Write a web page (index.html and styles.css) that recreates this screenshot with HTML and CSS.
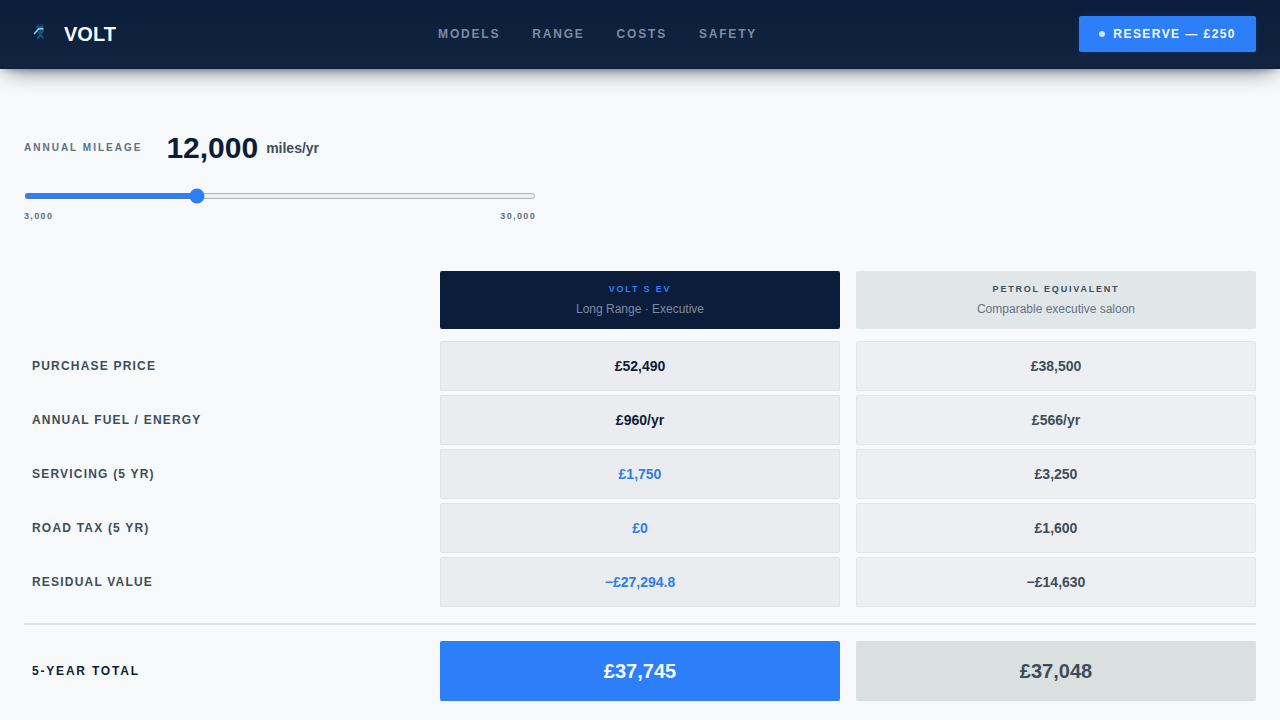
FILE: index.html
```html
<!DOCTYPE html>
<html lang="en">
<head>
    <meta charset="UTF-8">
    <meta name="viewport" content="width=device-width, initial-scale=1.0">
    <title>VOLT - Running Costs</title>
    <link rel="stylesheet" href="styles.css">
</head>
<body>
    <header class="site-header">
        <a class="logo" href="#">
            <svg class="logo-mark" viewBox="0 0 32 32" aria-hidden="true">
                <g fill="none" stroke-linecap="round" stroke-linejoin="round">
                    <path d="M14 7v4M18 7v4M13 9h6" stroke="#16578a" stroke-width="1.500"/>
                    <path d="M14 13l5 7M19 13l-5 7M16.500 12v5" stroke="#155580" stroke-width="2"/>
                    <path d="M10.500 15.500l4-4.500 2-.5 2.500.5" stroke="#93d4f0" stroke-width="1.500"/>
                </g>
            </svg>
            <span>VOLT</span>
        </a>
        <nav class="main-nav">
            <a href="#models">MODELS</a>
            <a href="#range">RANGE</a>
            <a href="#costs">COSTS</a>
            <a href="#safety">SAFETY</a>
        </nav>
        <button class="reserve-btn" type="button"><span class="dot"></span>RESERVE — £250</button>
    </header>

    <main class="costs" id="costs">
        <section class="mileage">
            <div class="mileage-head">
                <label for="mileage">ANNUAL MILEAGE</label>
                <output class="mileage-value" for="mileage" id="mileageValue">12,000</output>
                <span class="mileage-unit">miles/yr</span>
            </div>
            <input class="slider" type="range" id="mileage" min="3000" max="30000" step="500" value="12000">
            <div class="scale"><span>3,000</span><span>30,000</span></div>
        </section>

        <table class="compare">
            <thead>
                <tr>
                    <td></td>
                    <th class="head ev" scope="col">VOLT S EV<small>Long Range · Executive</small></th>
                    <th class="head petrol" scope="col">PETROL EQUIVALENT<small>Comparable executive saloon</small></th>
                </tr>
            </thead>
            <tbody>
                <tr>
                    <th scope="row">PURCHASE PRICE</th>
                    <td class="cell ev">£52,490</td>
                    <td class="cell">£38,500</td>
                </tr>
                <tr>
                    <th scope="row">ANNUAL FUEL / ENERGY</th>
                    <td class="cell ev">£960/yr</td>
                    <td class="cell">£566/yr</td>
                </tr>
                <tr>
                    <th scope="row">SERVICING (5 YR)</th>
                    <td class="cell ev saving">£1,750</td>
                    <td class="cell">£3,250</td>
                </tr>
                <tr>
                    <th scope="row">ROAD TAX (5 YR)</th>
                    <td class="cell ev saving">£0</td>
                    <td class="cell">£1,600</td>
                </tr>
                <tr>
                    <th scope="row">RESIDUAL VALUE</th>
                    <td class="cell ev saving">−£27,294.8</td>
                    <td class="cell">−£14,630</td>
                </tr>
            </tbody>
            <tfoot>
                <tr>
                    <th scope="row">5-YEAR TOTAL</th>
                    <td class="total ev">£37,745</td>
                    <td class="total">£37,048</td>
                </tr>
            </tfoot>
        </table>
    </main>

    <script>
        const mileage = document.getElementById('mileage');
        const mileageValue = document.getElementById('mileageValue');

        mileage.addEventListener('input', function() {
            mileageValue.textContent = Number(mileage.value).toLocaleString('en-GB');
        });
    </script>
</body>
</html>
```
FILE: styles.css
```css
* {
    margin: 0;
    padding: 0;
    box-sizing: border-box;
}

body {
    font-family: "Liberation Sans", Arial, sans-serif;
    background: #f7f9fb;
    color: #3d4d5c;
}

/* Header */
.site-header {
    position: sticky;
    top: 0;
    display: flex;
    align-items: center;
    justify-content: space-between;
    padding: 16px 24px;
    background: linear-gradient(180deg, #0b1d3a, #10243f);
    border-bottom: 1px solid #10203a;
    box-shadow: 0 8px 24px -8px rgba(10, 20, 45, 0.6), 0 4px 8px -4px rgba(10, 20, 45, 0.4);
}

.logo {
    display: flex;
    align-items: center;
    gap: 8px;
    color: #f7f9fb;
    font-size: 20px;
    font-weight: bold;
    text-decoration: none;
}

.logo-mark {
    width: 32px;
    height: 32px;
}

.main-nav {
    display: flex;
    gap: 32px;
}

.main-nav a {
    color: #7c8ba3;
    font-size: 12px;
    font-weight: bold;
    letter-spacing: 0.15em;
    text-decoration: none;
}

.reserve-btn {
    display: flex;
    align-items: center;
    gap: 8px;
    height: 36px;
    padding: 0 20px;
    background: #2d7ff9;
    border: none;
    border-radius: 2px;
    box-shadow: 0 0 8px rgba(45, 127, 249, 0.15);
    color: #f7f9fb;
    font-family: inherit;
    font-size: 12px;
    font-weight: bold;
    letter-spacing: 0.12em;
    cursor: pointer;
}

.dot {
    width: 6px;
    height: 6px;
    border-radius: 50%;
    background: #c9e2fd;
}

/* Mileage */
.costs {
    padding: 64px 24px 16px;
}

.mileage {
    max-width: 512px;
    margin-bottom: 48px;
}

.mileage-head {
    display: flex;
    align-items: center;
    line-height: 30px;
}

.mileage-head label {
    margin-right: 24px;
    color: #5f7080;
    font-size: 10px;
    font-weight: bold;
    letter-spacing: 0.2em;
}

.mileage-value {
    margin-right: 8px;
    color: #0b1d3a;
    font-size: 30px;
    font-weight: bold;
}

.mileage-unit {
    font-size: 14px;
    font-weight: bold;
}

.slider {
    display: block;
    width: 100%;
    height: 6px;
    margin: 30px 0 10px;
    accent-color: #2d7ff9;
    cursor: pointer;
}

.scale {
    display: flex;
    justify-content: space-between;
    color: #5f7080;
    font-size: 9px;
    font-weight: bold;
    line-height: 14px;
    letter-spacing: 0.15em;
}

/* Comparison table */
.compare,
.compare thead,
.compare tbody,
.compare tfoot {
    display: block;
}

.compare tr {
    display: grid;
    grid-template-columns: repeat(3, 1fr);
    column-gap: 16px;
    align-items: center;
}

.compare thead {
    margin-bottom: 12px;
}

.compare tbody tr {
    margin-bottom: 4px;
}

.compare tfoot {
    margin-top: 16px;
    padding-top: 16px;
    border-top: 2px solid #dfe2e6;
}

.compare th[scope="row"] {
    padding-left: 8px;
    font-size: 12px;
    letter-spacing: 0.1em;
    text-align: left;
}

.compare tfoot th[scope="row"] {
    color: #0b1d3a;
    letter-spacing: 0.15em;
}

.head {
    padding: 11px 16px;
    background: #e1e6e8;
    border-radius: 2px;
    font-size: 9px;
    line-height: 14px;
    letter-spacing: 0.2em;
}

.head small {
    display: block;
    margin-top: 4px;
    color: #64748b;
    font-size: 12px;
    font-weight: normal;
    line-height: 18px;
    letter-spacing: normal;
}

.head.ev {
    background: #0b1d3a;
    color: #2d7ff9;
}

.head.ev small {
    color: #7c8ba3;
}

.cell {
    padding: 16px;
    background: #eeeff2;
    border: 1px solid #e4e7ea;
    border-radius: 2px;
    font-size: 14px;
    font-weight: bold;
    line-height: 16px;
    text-align: center;
}

.cell.ev {
    background: #ebecef;
    border-color: #dfe2e6;
    color: #0b1d3a;
}

.cell.saving {
    color: #2d7fe6;
}

.total {
    padding: 16px;
    background: #dadfe0;
    border-radius: 2px;
    font-size: 20px;
    font-weight: bold;
    line-height: 28px;
    text-align: center;
}

.total.ev {
    background: #2d7ff9;
    color: #f7f9fb;
}
```
